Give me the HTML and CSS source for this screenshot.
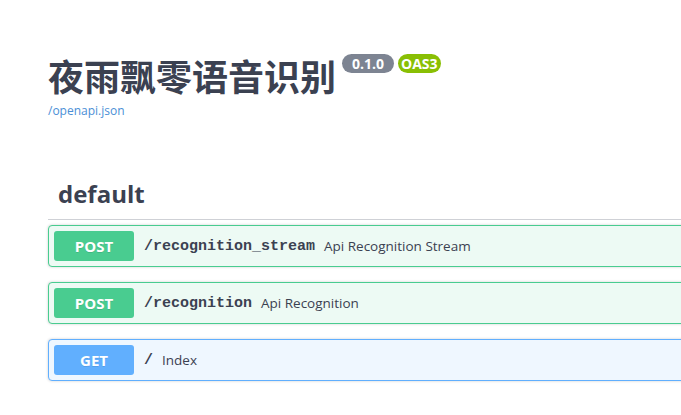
FILE: index.html
```html
<!DOCTYPE html>
<html lang="zh">
<head>
<meta charset="utf-8">
<title>夜雨飘零语音识别</title>
<link rel="stylesheet" href="styles.css">
</head>
<body>
<div class="wrapper">
  <div class="info">
    <div class="title-row">
      <h2 class="title">夜雨飘零语音识别</h2>
      <span class="badge badge-version">0.1.0</span>
      <span class="badge badge-oas">OAS3</span>
    </div>
    <a class="spec-link" href="#">/openapi.json</a>
  </div>
  <section class="tag-section">
    <h3 class="tag">default</h3>
    <div class="opblock opblock-post">
      <span class="method">POST</span>
      <span class="path">/recognition_stream</span>
      <span class="desc">Api Recognition Stream</span>
    </div>
    <div class="opblock opblock-post">
      <span class="method">POST</span>
      <span class="path">/recognition</span>
      <span class="desc">Api Recognition</span>
    </div>
    <div class="opblock opblock-get">
      <span class="method">GET</span>
      <span class="path">/</span>
      <span class="desc">Index</span>
    </div>
  </section>
</div>
</body>
</html>
```
FILE: styles.css
```css
html, body {
  margin: 0;
  padding: 0;
  background: #fff;
  overflow: hidden;
}
body {
  font-family: "Open Sans", "Noto Sans CJK SC", sans-serif;
  color: #3b4151;
}
.wrapper {
  width: 900px;
  padding: 0 0 0 48px;
}
.info {
  padding-top: 53px;
}
.title-row {
  display: flex;
  align-items: flex-start;
}
.title {
  margin: 4px 0 0 0;
  font-family: "Noto Sans CJK SC", sans-serif;
  font-size: 36px;
  line-height: 36px;
  font-weight: 700;
  color: #3b4151;
}
.badge {
  font-family: "Open Sans", sans-serif;
  font-size: 14px;
  font-weight: 700;
  line-height: 19px;
  height: 19px;
  margin-top: 1px;
  color: #fff;
  border-radius: 10px;
}
.badge-version {
  background: #7d8492;
  padding: 0 10px;
  margin-left: 6px;
}
.badge-oas {
  background: #89bf04;
  padding: 0 3px;
  margin-left: 4px;
}
.spec-link {
  display: block;
  margin-top: 10px;
  font-size: 12px;
  line-height: 16px;
  color: #4a8fd6;
  text-decoration: none;
}
.tag-section {
  margin-top: 49px;
}
.tag {
  margin: 0 0 5px 0;
  padding: 11px 0 10px 10px;
  font-size: 24px;
  line-height: 30px;
  font-weight: 700;
  color: #3b4151;
  border-bottom: 1px solid #cfd1d6;
}
.opblock {
  display: flex;
  align-items: center;
  height: 30px;
  padding: 5px;
  margin-bottom: 15px;
  border: 1px solid;
  border-radius: 4px;
  box-shadow: 0 0 3px rgba(0, 0, 0, 0.19);
}
.opblock-post {
  border-color: #49cc90;
  background: #edfaf4;
}
.opblock-get {
  border-color: #61affe;
  background: #eff7ff;
}
.method {
  min-width: 80px;
  height: 30px;
  line-height: 30px;
  text-align: center;
  font-size: 15px;
  font-weight: 700;
  color: #fff;
  border-radius: 3px;
  text-shadow: 0 1px 0 rgba(0, 0, 0, 0.1);
}
.opblock-post .method {
  background: #49cc90;
}
.opblock-get .method {
  background: #61affe;
}
.path {
  padding: 0 9px 0 10px;
  font-family: "Liberation Mono", monospace;
  font-size: 15px;
  font-weight: 700;
  color: #3b4151;
}
.desc {
  font-size: 13.5px;
  color: #3b4151;
}
```
